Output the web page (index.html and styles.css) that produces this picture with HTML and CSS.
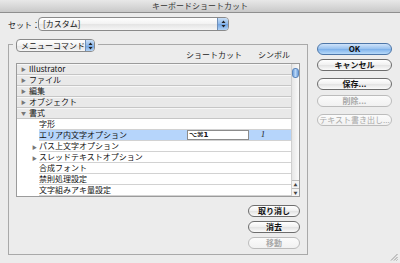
FILE: index.html
```html
<!DOCTYPE html>
<html lang="ja">
<head>
    <meta charset="UTF-8">
    <title>キーボードショートカット</title>
    <link rel="stylesheet" href="styles.css">
</head>
<body>

    <div class="window">
        <div class="titlebar">キーボードショートカット</div>

        <div class="content">
            <div class="left">
                <div class="set-row">
                    <span class="set-label">セット：</span>
                    <div class="popup popup-set">
                        <span class="popup-text">[カスタム]</span>
                        <span class="popup-arrow"><svg width="5" height="8" viewBox="0 0 5 8"><path d="M2.5 0.5 L4.5 3 L0.5 3 Z M2.5 7.5 L4.5 5 L0.5 5 Z" fill="#222"/></svg></span>
                    </div>
                </div>

                <div class="groupbox">
                    <div class="group-head">
                        <div class="popup popup-menu">
                            <span class="popup-text">メニューコマンド</span>
                            <span class="popup-arrow"><svg width="5" height="8" viewBox="0 0 5 8"><path d="M2.5 0.5 L4.5 3 L0.5 3 Z M2.5 7.5 L4.5 5 L0.5 5 Z" fill="#222"/></svg></span>
                        </div>
                    </div>
                    <div class="col-heads">
                        <span class="col-name"></span>
                        <span class="col-key">ショートカット</span>
                        <span class="col-sym">シンボル</span>
                    </div>

                    <div class="table">
                        <ul class="rows">
                            <li class="row top"><span class="tri">▶</span>Illustrator</li>
                            <li class="row top"><span class="tri">▶</span>ファイル</li>
                            <li class="row top"><span class="tri">▶</span>編集</li>
                            <li class="row top"><span class="tri">▶</span>オブジェクト</li>
                            <li class="row top"><span class="tri open">▼</span>書式</li>
                            <li class="row child"><span class="sub"></span><span class="cell">字形</span></li>
                            <li class="row child selected"><span class="sub"></span><span class="cell"><span class="name">エリア内文字オプション</span><span class="key-field">⌥⌘1</span><span class="sym">1</span></span></li>
                            <li class="row child"><span class="sub"><span class="tri">▶</span></span><span class="cell">パス上文字オプション</span></li>
                            <li class="row child"><span class="sub"><span class="tri">▶</span></span><span class="cell">スレッドテキストオプション</span></li>
                            <li class="row child"><span class="sub"></span><span class="cell">合成フォント</span></li>
                            <li class="row child"><span class="sub"></span><span class="cell">禁則処理設定</span></li>
                            <li class="row child"><span class="sub"></span><span class="cell">文字組みアキ量設定</span></li>
                        </ul>
                        <div class="scrollbar">
                            <div class="thumb"></div>
                            <div class="arrows">
                                <span class="arrow">▲</span>
                                <span class="arrow">▼</span>
                            </div>
                        </div>
                    </div>

                    <div class="table-buttons">
                        <button class="btn small">取り消し</button>
                        <button class="btn small">消去</button>
                        <button class="btn small" disabled>移動</button>
                    </div>
                </div>
            </div>

            <div class="right">
                <button class="btn default">OK</button>
                <button class="btn cancel">キャンセル</button>
                <button class="btn save">保存...</button>
                <button class="btn del" disabled>削除...</button>
                <button class="btn export" disabled>テキスト書き出し...</button>
            </div>
        </div>

        <svg class="grip" width="8" height="8" viewBox="0 0 8 8">
            <path d="M7.5 1 L1 7.5 M7.5 4 L4 7.5 M7.5 6.5 L6.5 7.5" stroke="#999" stroke-width="1"/>
        </svg>
    </div>

</body>
</html>
```

FILE: styles.css
```css
* {
    box-sizing: border-box;
}
body {
    margin: 0;
    font-family: "Noto Sans CJK JP", "Liberation Sans", sans-serif;
    font-size: 8px;
    color: #111;
    background: #ececec;
}
.window {
    position: relative;
    width: 400px;
    height: 263px;
    background: #ececec;
    overflow: hidden;
}
.titlebar {
    height: 13px;
    line-height: 12px;
    text-align: center;
    font-size: 8px;
    color: #333;
    background: linear-gradient(#e8e8e8, #c9c9c9);
    border-bottom: 1px solid #8f8f8f;
}
.content {
    display: flex;
    padding-left: 8px;
}
.left {
    width: 300px;
}
.right {
    display: flex;
    flex-direction: column;
    width: 75px;
    margin-left: 9px;
    padding-top: 30px;
}

/* set popup */
.set-row {
    display: flex;
    align-items: center;
    margin-top: 4px;
    height: 14px;
}
.set-label {
    width: 30px;
    white-space: nowrap;
    color: #222;
}
.popup {
    display: flex;
    align-items: stretch;
    height: 14px;
    border: 1px solid #8a8a8a;
    border-radius: 4px;
    background: linear-gradient(#ffffff, #f2f2f2 50%, #e4e4e4 51%, #f6f6f6);
    overflow: hidden;
}
.popup-set {
    width: 191px;
}
.popup-menu {
    width: 79px;
    height: 13px;
    box-shadow: 0 0 0 3px #ececec;
}
.popup-text {
    flex: 1;
    padding-left: 4px;
    line-height: 12px;
    white-space: nowrap;
}
.popup-arrow {
    display: flex;
    align-items: center;
    justify-content: center;
    width: 11px;
    border-left: 1px solid #6f8fb8;
    background: linear-gradient(#c8def6, #8db8ea 50%, #6fa3e2 51%, #b2d2f4);
}

/* group box */
.groupbox {
    margin-top: 13px;
    width: 300px;
    height: 211px;
    border: 1px solid #a9a9a9;
    padding: 0 7px;
}
.group-head {
    display: flex;
    margin-top: -6px;
    height: 13px;
}
.col-heads {
    display: grid;
    grid-template-columns: 170px 72px auto;
    margin-top: -2px;
    height: 9px;
    line-height: 9px;
    color: #222;
}

/* table */
.table {
    display: flex;
    margin-top: 4px;
    height: 134px;
    border: 1px solid #9b9b9b;
    background: #fff;
}
.rows {
    flex: 1;
    list-style: none;
    margin: 0;
    padding: 0;
}
.row {
    display: flex;
    align-items: center;
    height: 11px;
    line-height: 10px;
    white-space: nowrap;
}
.row.top {
    background: #e9e9e9;
    border-bottom: 1px solid #c6c6c6;
    box-shadow: inset 0 1px 0 #f7f7f7;
}
.tri {
    display: inline-block;
    width: 12px;
    padding-left: 4px;
    font-size: 5px;
    color: #777;
}
.row.child {
    align-items: stretch;
}
.sub {
    display: flex;
    align-items: center;
    width: 22px;
    padding-left: 11px;
}
.cell {
    flex: 1;
    display: flex;
    align-items: center;
    border-bottom: 1px solid #d2d2d2;
}
.row.selected .cell {
    background: #b6d5fb;
}
.name {
    width: 148px;
}
.key-field {
    width: 62px;
    height: 10px;
    line-height: 9px;
    padding-left: 1px;
    background: #fff;
    border: 1px solid #8c8c8c;
    font-family: "DejaVu Sans", sans-serif;
    font-size: 7px;
    font-weight: bold;
}
.sym {
    margin-left: 12px;
    font-style: italic;
    font-family: "Liberation Serif", serif;
}

/* scrollbar */
.scrollbar {
    display: flex;
    flex-direction: column;
    width: 8px;
    border-left: 1px solid #cfcfcf;
    background: linear-gradient(90deg, #e6e6e6, #fafafa);
}
.thumb {
    margin-top: 4px;
    width: 7px;
    height: 10px;
    border-radius: 3px;
    border: 1px solid #5c86bb;
    background: linear-gradient(90deg, #6fa0dc, #b8d6f6, #6fa0dc);
}
.arrows {
    margin-top: auto;
    display: flex;
    flex-direction: column;
}
.arrow {
    height: 8px;
    line-height: 8px;
    font-size: 4px;
    text-align: center;
    color: #444;
    border-top: 1px solid #bdbdbd;
    background: #f4f4f4;
}

/* buttons */
.btn {
    display: block;
    height: 12px;
    padding: 0;
    font-family: inherit;
    font-size: 8px;
    line-height: 10px;
    font-weight: bold;
    color: #111;
    border: 1px solid #6d6d6d;
    border-radius: 6px;
    background: linear-gradient(#ffffff, #f0f0f0 50%, #e2e2e2 51%, #fbfbfb);
}
.btn:disabled {
    color: #a8a8a8;
    border-color: #bcbcbc;
    background: linear-gradient(#fbfbfb, #f1f1f1);
}
.btn.default {
    border-color: #4d76a8;
    background: linear-gradient(#cfe3fa, #96c0ee 50%, #7cb0ea 51%, #b8daf9);
}
.right .btn {
    width: 75px;
}
.cancel {
    margin-top: 4px;
}
.save {
    margin-top: 7px;
}
.del {
    margin-top: 5px;
}
.export {
    margin-top: 7px;
    font-weight: normal;
}
.table-buttons {
    display: flex;
    flex-direction: column;
    align-items: flex-end;
    gap: 4px;
    margin-top: 8px;
}
.btn.small {
    width: 52px;
}

.grip {
    position: absolute;
    right: 2px;
    bottom: 2px;
}
```
